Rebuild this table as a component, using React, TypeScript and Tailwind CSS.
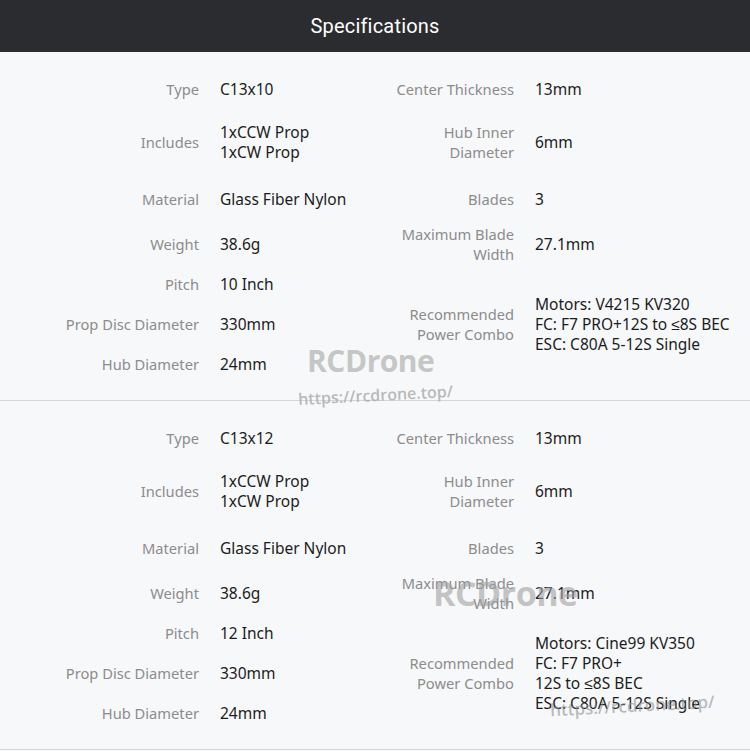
import React from 'react';

type Spec = { label: React.ReactNode; value: React.ReactNode };

const sections = [
  {
    left: [
      { label: 'Type', value: 'C13x10' },
      { label: 'Includes', value: <>1xCCW Prop<br />1xCW Prop</> },
      { label: 'Material', value: 'Glass Fiber Nylon' },
      { label: 'Weight', value: '38.6g' },
      { label: 'Pitch', value: '10 Inch' },
      { label: 'Prop Disc Diameter', value: '330mm' },
      { label: 'Hub Diameter', value: '24mm' },
    ],
    right: [
      { label: 'Center Thickness', value: '13mm' },
      { label: <>Hub Inner<br />Diameter</>, value: '6mm' },
      { label: 'Blades', value: '3' },
      { label: <>Maximum Blade<br />Width</>, value: '27.1mm' },
    ],
    combo: ['Motors: V4215 KV320', 'FC: F7 PRO+12S to ≤8S BEC', 'ESC: C80A 5-12S Single'],
  },
  {
    left: [
      { label: 'Type', value: 'C13x12' },
      { label: 'Includes', value: <>1xCCW Prop<br />1xCW Prop</> },
      { label: 'Material', value: 'Glass Fiber Nylon' },
      { label: 'Weight', value: '38.6g' },
      { label: 'Pitch', value: '12 Inch' },
      { label: 'Prop Disc Diameter', value: '330mm' },
      { label: 'Hub Diameter', value: '24mm' },
    ],
    right: [
      { label: 'Center Thickness', value: '13mm' },
      { label: <>Hub Inner<br />Diameter</>, value: '6mm' },
      { label: 'Blades', value: '3' },
      { label: <>Maximum Blade<br />Width</>, value: '27.1mm' },
    ],
    combo: ['Motors: Cine99 KV350', 'FC: F7 PRO+', '12S to ≤8S BEC', 'ESC: C80A 5-12S Single'],
  },
];

const Label = ({ children }: { children: React.ReactNode }) => (
  <div className="text-right text-[#8c8c8c] text-[14.7px] whitespace-nowrap">{children}</div>
);

const Value = ({ children }: { children: React.ReactNode }) => (
  <div className="text-[#1c1c1c] text-[15.5px] whitespace-nowrap">{children}</div>
);

const SpecTable: React.FC<{ left: Spec[]; right: Spec[]; combo: string[] }> = ({ left, right, combo }) => (
  <div className="grid grid-cols-[199px_153px_120px_1fr] grid-rows-[42px_64px_50px_40px_40px_40px_40px] gap-x-[21px] items-center pt-[16px] pb-[16px] border-b border-[#d4d6d9]">
    {left.map((row, i) => (
      <React.Fragment key={i}>
        <div className="col-start-1" style={{ gridRow: i + 1 }}>
          <Label>{row.label}</Label>
        </div>
        <div className="col-start-2" style={{ gridRow: i + 1 }}>
          <Value>{row.value}</Value>
        </div>
      </React.Fragment>
    ))}
    {right.map((row, i) => (
      <React.Fragment key={i}>
        <div className="col-start-3" style={{ gridRow: i + 1 }}>
          <Label>{row.label}</Label>
        </div>
        <div className="col-start-4" style={{ gridRow: i + 1 }}>
          <Value>{row.value}</Value>
        </div>
      </React.Fragment>
    ))}
    <div className="col-start-3 row-start-5 row-span-3">
      <Label>Recommended<br />Power Combo</Label>
    </div>
    <div className="col-start-4 row-start-5 row-span-3">
      <Value>
        {combo.map((line, i) => (
          <div key={i}>{line}</div>
        ))}
      </Value>
    </div>
  </div>
);

export default function App() {
  return (
    <div className="relative w-[750px] h-[751px] overflow-hidden bg-[#f7f8fa] font-['Noto_Sans',sans-serif] text-[15px] leading-[20px]">
      {/* Header */}
      <div className="h-[52px] bg-[#2b2c30] flex items-center justify-center">
        <h1 className="text-white text-[20px] font-['Roboto',sans-serif] tracking-[0.2px]">Specifications</h1>
      </div>

      {sections.map((s, i) => (
        <SpecTable key={i} left={s.left} right={s.right} combo={s.combo} />
      ))}

      {/* Watermarks */}
      <div className="absolute left-[307px] top-[343px] text-[30px] leading-[36px] font-bold text-[#b8b8b8]/80 font-['Open_Sans',sans-serif] tracking-[-0.5px]">
        RCDrone
      </div>
      <div className="absolute left-[298px] top-[385px] text-[16px] leading-[20px] font-semibold text-[#a8a8a8]/80 font-['Open_Sans',sans-serif] -rotate-[3deg]">
        https://rcdrone.top/
      </div>
      <div className="absolute left-[433px] top-[573px] text-[34px] leading-[40px] font-bold text-[#a0a0a0]/60 font-['Open_Sans',sans-serif] tracking-[-0.5px]">
        RCDrone
      </div>
      <div className="absolute left-[550px] top-[695px] text-[17px] leading-[22px] font-semibold text-[#909090]/60 font-['Open_Sans',sans-serif] -rotate-[3deg]">
        https://rcdrone.top/
      </div>
    </div>
  );
}
